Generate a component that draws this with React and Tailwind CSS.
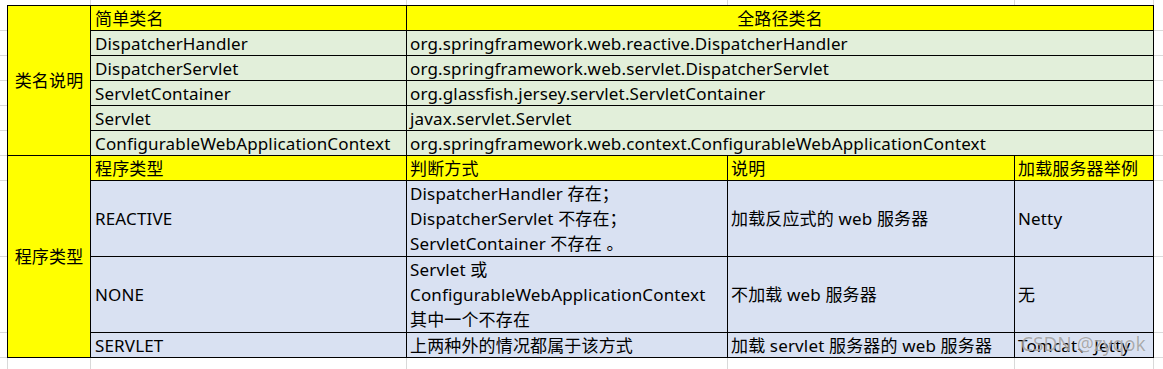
const FONT = { fontFamily: '"Noto Sans", "Noto Sans CJK SC", sans-serif' };

const yellow = "bg-[#ffff00]";
const green = "bg-[#e2efda]";
const blue = "bg-[#d9e1f2]";
const cell = "border-r border-b border-black flex items-center px-[3px] text-[17px] tracking-[0.15px] leading-[25px] text-black whitespace-nowrap overflow-hidden";

const classRows = [
  ["DispatcherHandler", "org.springframework.web.reactive.DispatcherHandler"],
  ["DispatcherServlet", "org.springframework.web.servlet.DispatcherServlet"],
  ["ServletContainer", "org.glassfish.jersey.servlet.ServletContainer"],
  ["Servlet", "javax.servlet.Servlet"],
  ["ConfigurableWebApplicationContext", "org.springframework.web.context.ConfigurableWebApplicationContext"],
];

const typeRows = [
  {
    type: "REACTIVE",
    how: ["DispatcherHandler 存在；", "DispatcherServlet 不存在；", "ServletContainer 不存在 。"],
    desc: "加载反应式的 web 服务器",
    server: "Netty",
  },
  {
    type: "NONE",
    how: ["Servlet 或", "ConfigurableWebApplicationContext", "其中一个不存在"],
    desc: "不加载 web 服务器",
    server: "无",
  },
  {
    type: "SERVLET",
    how: ["上两种外的情况都属于该方式"],
    desc: "加载 servlet 服务器的 web 服务器",
    server: "Tomcat、Jetty",
  },
];

const gutterRows = [26, 25, 25, 25, 25, 25, 25, 76, 76, 25];

function Gutter({ className = "" }) {
  return (
    <div className={`flex flex-col ${className}`}>
      {gutterRows.map((h, i) => (
        <div key={i} className="border-b border-[#d9d9d9]" style={{ height: h }} />
      ))}
    </div>
  );
}

export default function App() {
  return (
    <div className="w-[1163px] h-[369px] bg-white relative overflow-hidden flex flex-col" style={FONT}>
      {/* top strip */}
      <div className="h-[5px] flex shrink-0">
        <div className="w-[91px] border-r border-[#d9d9d9]" />
        <div className="w-[316px] border-r border-[#d9d9d9]" />
        <div className="w-[321px] border-r border-[#d9d9d9]" />
        <div className="w-[287px] border-r border-[#d9d9d9]" />
        <div className="w-[139px] border-r border-[#d9d9d9]" />
      </div>

      <div className="flex shrink-0">
        <Gutter className="w-[7px]" />

        <div className="w-[1147px] border-l border-t border-black grid grid-cols-[83px_316px_321px_287px_139px] grid-rows-[repeat(7,25px)_76px_76px_25px]">
          {/* 类名说明 section */}
          <div className={`${cell} ${yellow} row-span-6 justify-center`}>类名说明</div>
          <div className={`${cell} ${yellow} pl-[4px]`}>简单类名</div>
          <div className={`${cell} ${yellow} col-span-3 justify-center`}>全路径类名</div>
          {classRows.map(([name, full]) => (
            <div key={name} className="contents">
              <div className={`${cell} ${green} pl-[4px]`}>{name}</div>
              <div className={`${cell} ${green} col-span-3`}>{full}</div>
            </div>
          ))}

          {/* 程序类型 section */}
          <div className={`${cell} ${yellow} row-span-4 justify-center`}>程序类型</div>
          <div className={`${cell} ${yellow} pl-[4px]`}>程序类型</div>
          <div className={`${cell} ${yellow}`}>判断方式</div>
          <div className={`${cell} ${yellow}`}>说明</div>
          <div className={`${cell} ${yellow}`}>加载服务器举例</div>
          {typeRows.map((r) => (
            <div key={r.type} className="contents">
              <div className={`${cell} ${blue} pl-[4px]`}>{r.type}</div>
              <div className={`${cell} ${blue} flex-col !items-start justify-center`}>
                {r.how.map((l) => (
                  <span key={l}>{l}</span>
                ))}
              </div>
              <div className={`${cell} ${blue}`}>{r.desc}</div>
              <div className={`${cell} ${blue}`}>{r.server}</div>
            </div>
          ))}
        </div>

        <Gutter className="flex-1" />
      </div>

      {/* bottom strip */}
      <div className="flex-1 flex">
        <div className="w-[8px] border-r border-[#d9d9d9]" />
        <div className="w-[83px] border-r border-[#d9d9d9]" />
        <div className="w-[316px] border-r border-[#d9d9d9]" />
        <div className="w-[321px] border-r border-[#d9d9d9]" />
        <div className="w-[287px] border-r border-[#d9d9d9]" />
        <div className="w-[139px] border-r border-[#d9d9d9]" />
      </div>

      {/* watermark */}
      <div className="absolute left-[1021px] top-[331px] text-[19px] leading-[26px] text-[rgba(120,120,120,0.6)] [text-shadow:0_0_1px_rgba(255,255,255,0.8)] pointer-events-none">
        CSDN @zyqok
      </div>
    </div>
  );
}
